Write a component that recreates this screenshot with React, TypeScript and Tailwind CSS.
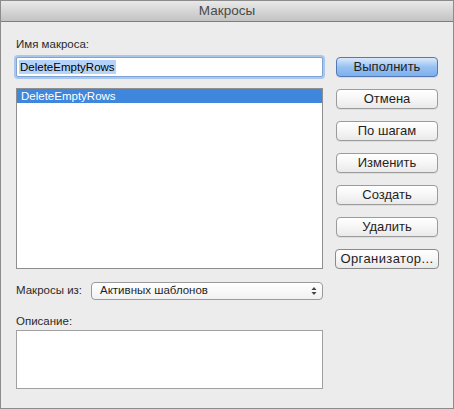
import React from "react";

const font = { fontFamily: '"Liberation Sans", Arial, sans-serif' };

const buttons = ["Отмена", "По шагам", "Изменить", "Создать", "Удалить"];

function MacButton({ label, primary = false }: { label: string; primary?: boolean }) {
  const base =
    "h-[20px] w-[102px] rounded-[4px] border text-[13px] leading-[18px] text-center text-[#1f1f1f]";
  if (primary) {
    return (
      <div
        className={`${base} border-[#5478b4] bg-gradient-to-b from-[#dbe9fb] via-[#98c1f1] to-[#7cb0ee] shadow-[0_1px_0_rgba(0,0,0,0.08)]`}
      >
        {label}
      </div>
    );
  }
  return (
    <div
      className={`${base} border-[#9b9b9b] bg-gradient-to-b from-white via-[#f6f6f6] to-[#e9e9e9] shadow-[0_1px_0_rgba(0,0,0,0.06)]`}
    >
      {label}
    </div>
  );
}

export default function App() {
  return (
    <div className="w-[454px] h-[409px] bg-white" style={font}>
      <div className="w-[454px] h-[409px] border border-[#8c8c8c] bg-[#ececec] flex flex-col">
        {/* title bar */}
        <div className="h-[21px] shrink-0 border-b border-[#7d7d7d] bg-gradient-to-b from-[#e9e9e9] to-[#c3c3c3] flex items-center justify-center">
          <span className="text-[13.5px] text-[#4a4a4a] leading-none">Макросы</span>
        </div>

        <div className="flex pl-[15px] pt-[15px]">
          {/* left column */}
          <div className="w-[307px] flex flex-col">
            <div className="text-[11.5px] leading-[14px] text-[#2a2a2a] h-[14px]">Имя макроса:</div>
            <div className="mt-[6px] h-[20px] rounded-[2px] border border-[#7fa4d4] bg-white shadow-[0_0_0_2px_#a9c7ec] flex items-center px-[2px]">
              <span className="bg-[#b5d3f8] text-[11.5px] leading-[14px] text-black px-[1px]">
                DeleteEmptyRows
              </span>
            </div>

            <div className="mt-[11px] h-[181px] border border-[#8e8e8e] bg-white">
              <div className="h-[14px] bg-[#3f86dd] text-white text-[11.5px] leading-[14px] pl-[4px]">
                DeleteEmptyRows
              </div>
            </div>

            <div className="mt-[13px] flex items-center h-[18px]">
              <span className="text-[11.5px] text-[#2a2a2a] w-[75px]">Макросы из:</span>
              <div className="flex-1 h-[18px] rounded-[4px] border border-[#9a9a9a] bg-gradient-to-b from-white to-[#f1f1f1] flex items-center justify-between pl-[8px] pr-[5px]">
                <span className="text-[11.5px] text-[#1f1f1f] leading-none">Активных шаблонов</span>
                <svg width="6" height="10" viewBox="0 0 6 10">
                  <path d="M3 1 L5.5 4 H0.5 Z" fill="#444" />
                  <path d="M3 9 L5.5 6 H0.5 Z" fill="#444" />
                </svg>
              </div>
            </div>

            <div className="mt-[14px] text-[11.5px] leading-[14px] text-[#2a2a2a]">Описание:</div>
            <div className="mt-[2px] h-[59px] border border-[#a0a0a0] bg-white" />
          </div>

          {/* right column */}
          <div className="ml-[13px] flex flex-col gap-[12px] pt-[20px]">
            <MacButton label="Выполнить" primary />
            {buttons.map((b) => (
              <MacButton key={b} label={b} />
            ))}
            <div className="h-[20px] w-[104px] -ml-[1px] rounded-[4px] border border-[#8a8a8a] bg-gradient-to-b from-white via-[#f6f6f6] to-[#e9e9e9] text-[13px] tracking-[0.4px] leading-[18px] text-center text-[#1f1f1f] whitespace-nowrap overflow-hidden">
              Организатор...
            </div>
          </div>
        </div>
      </div>
    </div>
  );
}
